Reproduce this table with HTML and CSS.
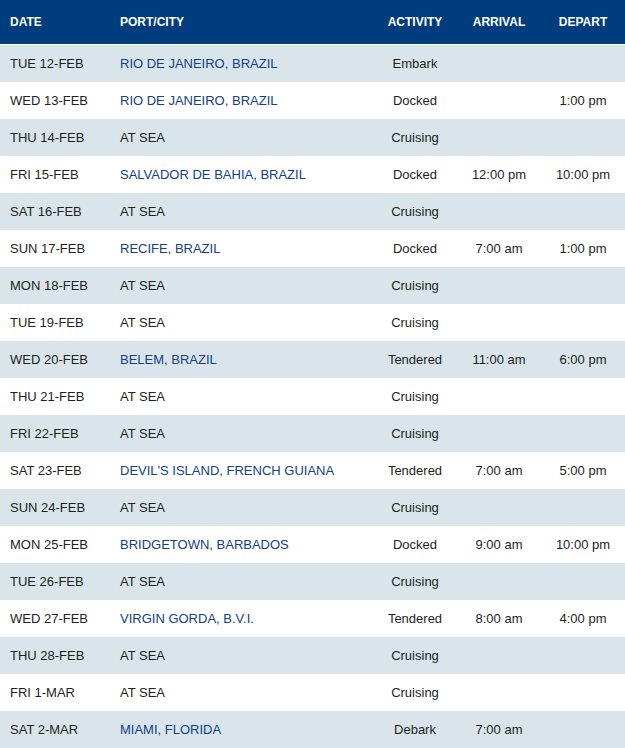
FILE: index.html
```html
<!DOCTYPE html>
<html lang="en">
<head>
    <meta charset="UTF-8">
    <meta name="viewport" content="width=device-width, initial-scale=1.0">
    <title>Itinerary</title>
    <link rel="stylesheet" href="styles.css">
</head>
<body>
    <table class="itinerary">
        <colgroup>
            <col class="col-date">
            <col class="col-port">
            <col class="col-num">
            <col class="col-num">
            <col class="col-num">
        </colgroup>
        <thead>
            <tr>
                <th class="left">DATE</th>
                <th class="left">PORT/CITY</th>
                <th>ACTIVITY</th>
                <th>ARRIVAL</th>
                <th>DEPART</th>
            </tr>
        </thead>
        <tbody>
            <tr><td class="date">TUE 12-FEB</td><td class="port">RIO DE JANEIRO, BRAZIL</td><td>Embark</td><td></td><td></td></tr>
            <tr><td class="date">WED 13-FEB</td><td class="port">RIO DE JANEIRO, BRAZIL</td><td>Docked</td><td></td><td>1:00 pm</td></tr>
            <tr><td class="date">THU 14-FEB</td><td class="sea">AT SEA</td><td>Cruising</td><td></td><td></td></tr>
            <tr><td class="date">FRI 15-FEB</td><td class="port">SALVADOR DE BAHIA, BRAZIL</td><td>Docked</td><td>12:00 pm</td><td>10:00 pm</td></tr>
            <tr><td class="date">SAT 16-FEB</td><td class="sea">AT SEA</td><td>Cruising</td><td></td><td></td></tr>
            <tr><td class="date">SUN 17-FEB</td><td class="port">RECIFE, BRAZIL</td><td>Docked</td><td>7:00 am</td><td>1:00 pm</td></tr>
            <tr><td class="date">MON 18-FEB</td><td class="sea">AT SEA</td><td>Cruising</td><td></td><td></td></tr>
            <tr><td class="date">TUE 19-FEB</td><td class="sea">AT SEA</td><td>Cruising</td><td></td><td></td></tr>
            <tr><td class="date">WED 20-FEB</td><td class="port">BELEM, BRAZIL</td><td>Tendered</td><td>11:00 am</td><td>6:00 pm</td></tr>
            <tr><td class="date">THU 21-FEB</td><td class="sea">AT SEA</td><td>Cruising</td><td></td><td></td></tr>
            <tr><td class="date">FRI 22-FEB</td><td class="sea">AT SEA</td><td>Cruising</td><td></td><td></td></tr>
            <tr><td class="date">SAT 23-FEB</td><td class="port">DEVIL'S ISLAND, FRENCH GUIANA</td><td>Tendered</td><td>7:00 am</td><td>5:00 pm</td></tr>
            <tr><td class="date">SUN 24-FEB</td><td class="sea">AT SEA</td><td>Cruising</td><td></td><td></td></tr>
            <tr><td class="date">MON 25-FEB</td><td class="port">BRIDGETOWN, BARBADOS</td><td>Docked</td><td>9:00 am</td><td>10:00 pm</td></tr>
            <tr><td class="date">TUE 26-FEB</td><td class="sea">AT SEA</td><td>Cruising</td><td></td><td></td></tr>
            <tr><td class="date">WED 27-FEB</td><td class="port">VIRGIN GORDA, B.V.I.</td><td>Tendered</td><td>8:00 am</td><td>4:00 pm</td></tr>
            <tr><td class="date">THU 28-FEB</td><td class="sea">AT SEA</td><td>Cruising</td><td></td><td></td></tr>
            <tr><td class="date">FRI 1-MAR</td><td class="sea">AT SEA</td><td>Cruising</td><td></td><td></td></tr>
            <tr><td class="date">SAT 2-MAR</td><td class="port">MIAMI, FLORIDA</td><td>Debark</td><td>7:00 am</td><td></td></tr>
        </tbody>
    </table>
</body>
</html>
```

FILE: styles.css
```css
body {
    margin: 0;
    background: #ffffff;
    font-family: "Liberation Sans", Arial, sans-serif;
    color: #231f20;
}
.itinerary {
    width: 625px;
    border-collapse: collapse;
    table-layout: fixed;
}
.col-date {
    width: 110px;
}
.col-port {
    width: 263px;
}
.col-num {
    width: 84px;
}
.itinerary th {
    background: #003d7e;
    color: #ffffff;
    font-size: 12px;
    font-weight: bold;
    height: 44px;
    padding: 0;
    text-align: center;
    border-bottom: 1px solid #ffffff;
}
.itinerary th.left {
    text-align: left;
    padding-left: 10px;
}
.itinerary td {
    height: 37px;
    padding: 0;
    font-size: 13px;
    text-align: center;
    white-space: nowrap;
}
.itinerary tbody tr:nth-child(odd) {
    background: #d9e5eb;
}
.itinerary td.date,
.itinerary td.port,
.itinerary td.sea {
    text-align: left;
    padding-left: 10px;
}
.itinerary td.port {
    color: #12408a;
}
```
